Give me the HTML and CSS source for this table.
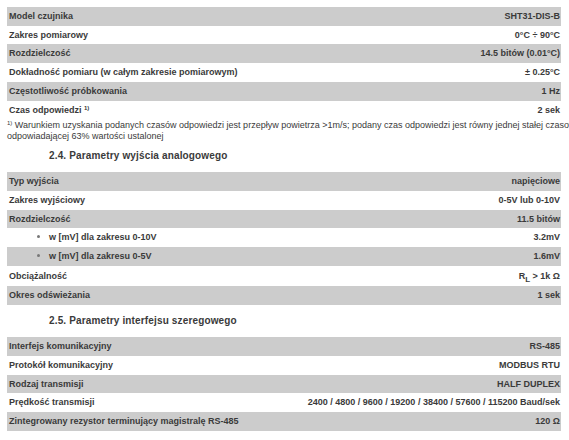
FILE: index.html
```html
<!DOCTYPE html>
<html lang="pl">
<head>
<meta charset="utf-8">
<title>Parametry</title>
<link rel="stylesheet" href="styles.css">
</head>
<body>
<div class="page">
  <table class="spec">
    <tr class="alt"><td>Model czujnika</td><td class="val">SHT31-DIS-B</td></tr>
    <tr><td>Zakres pomiarowy</td><td class="val">0°C ÷ 90°C</td></tr>
    <tr class="alt"><td>Rozdzielczość</td><td class="val">14.5 bitów (0.01°C)</td></tr>
    <tr><td>Dokładność pomiaru (w całym zakresie pomiarowym)</td><td class="val">± 0.25°C</td></tr>
    <tr class="alt"><td>Częstotliwość próbkowania</td><td class="val">1 Hz</td></tr>
    <tr><td>Czas odpowiedzi <sup>1)</sup></td><td class="val">2 sek</td></tr>
  </table>
  <p class="note"><sup>1)</sup> Warunkiem uzyskania podanych czasów odpowiedzi jest przepływ powietrza &gt;1m/s; podany czas odpowiedzi jest równy jednej stałej czasowej<br>odpowiadającej 63% wartości ustalonej</p>

  <h3 class="section">2.4. Parametry wyjścia analogowego</h3>
  <table class="spec">
    <tr class="alt"><td>Typ wyjścia</td><td class="val">napięciowe</td></tr>
    <tr><td>Zakres wyjściowy</td><td class="val">0-5V lub 0-10V</td></tr>
    <tr class="alt"><td>Rozdzielczość</td><td class="val">11.5 bitów</td></tr>
    <tr><td class="sub"><span class="dot"></span>w [mV] dla zakresu 0-10V</td><td class="val">3.2mV</td></tr>
    <tr class="alt"><td class="sub"><span class="dot"></span>w [mV] dla zakresu 0-5V</td><td class="val">1.6mV</td></tr>
    <tr class="tall"><td>Obciążalność</td><td class="val">R<sub>L</sub> &gt; 1k Ω</td></tr>
    <tr class="alt"><td>Okres odświeżania</td><td class="val">1 sek</td></tr>
  </table>

  <h3 class="section">2.5. Parametry interfejsu szeregowego</h3>
  <table class="spec">
    <tr class="alt"><td>Interfejs komunikacyjny</td><td class="val">RS-485</td></tr>
    <tr><td>Protokół komunikacyjny</td><td class="val">MODBUS RTU</td></tr>
    <tr class="alt"><td>Rodzaj transmisji</td><td class="val">HALF DUPLEX</td></tr>
    <tr><td>Prędkość transmisji</td><td class="val">2400 / 4800 / 9600 / 19200 / 38400 / 57600 / 115200 Baud/sek</td></tr>
    <tr class="alt"><td>Zintegrowany rezystor terminujący magistralę RS-485</td><td class="val">120 Ω</td></tr>
  </table>
</div>
</body>
</html>
```
FILE: styles.css
```css
html, body {
  margin: 0;
  padding: 0;
  background: #fff;
  overflow: hidden;
}
body {
  font-family: "Liberation Sans", Arial, sans-serif;
  color: #3a3a3a;
}
.page {
  width: 554px;
  margin: 7px 0 0 7px;
}
.spec {
  width: 554px;
  border-collapse: collapse;
  font-size: 9px;
  font-weight: bold;
  line-height: 10.7px;
}
.spec td {
  padding: 4px 1px 4px 2px;
  white-space: nowrap;
}
.spec .val {
  text-align: right;
}
.spec tr.alt td {
  background: #cccccc;
}
.spec tr.tall td {
  padding-top: 5px;
  padding-bottom: 5px;
}
.spec sup {
  font-size: 6px;
  line-height: 0;
  vertical-align: 3px;
}
.spec sub {
  font-size: 8px;
  line-height: 0;
  vertical-align: -3px;
}
.spec td.sub {
  padding-left: 42px;
}
.dot {
  display: inline-block;
  width: 3px;
  height: 3px;
  border-radius: 50%;
  background: #777;
  vertical-align: 2px;
  margin-left: -12px;
  margin-right: 9px;
}
.note {
  margin: 1px 0 0 0;
  width: 640px;
  font-size: 9px;
  line-height: 11px;
  white-space: nowrap;
}
.note sup {
  font-size: 6px;
  line-height: 0;
  vertical-align: 3px;
}
.section {
  margin: 8px 0 10px 42px;
  font-size: 10px;
  line-height: 12px;
  font-weight: bold;
  letter-spacing: 0.15px;
}
.section + .spec {
  margin-top: 0;
}
.spec + .section {
  margin-top: 10px;
}
```
